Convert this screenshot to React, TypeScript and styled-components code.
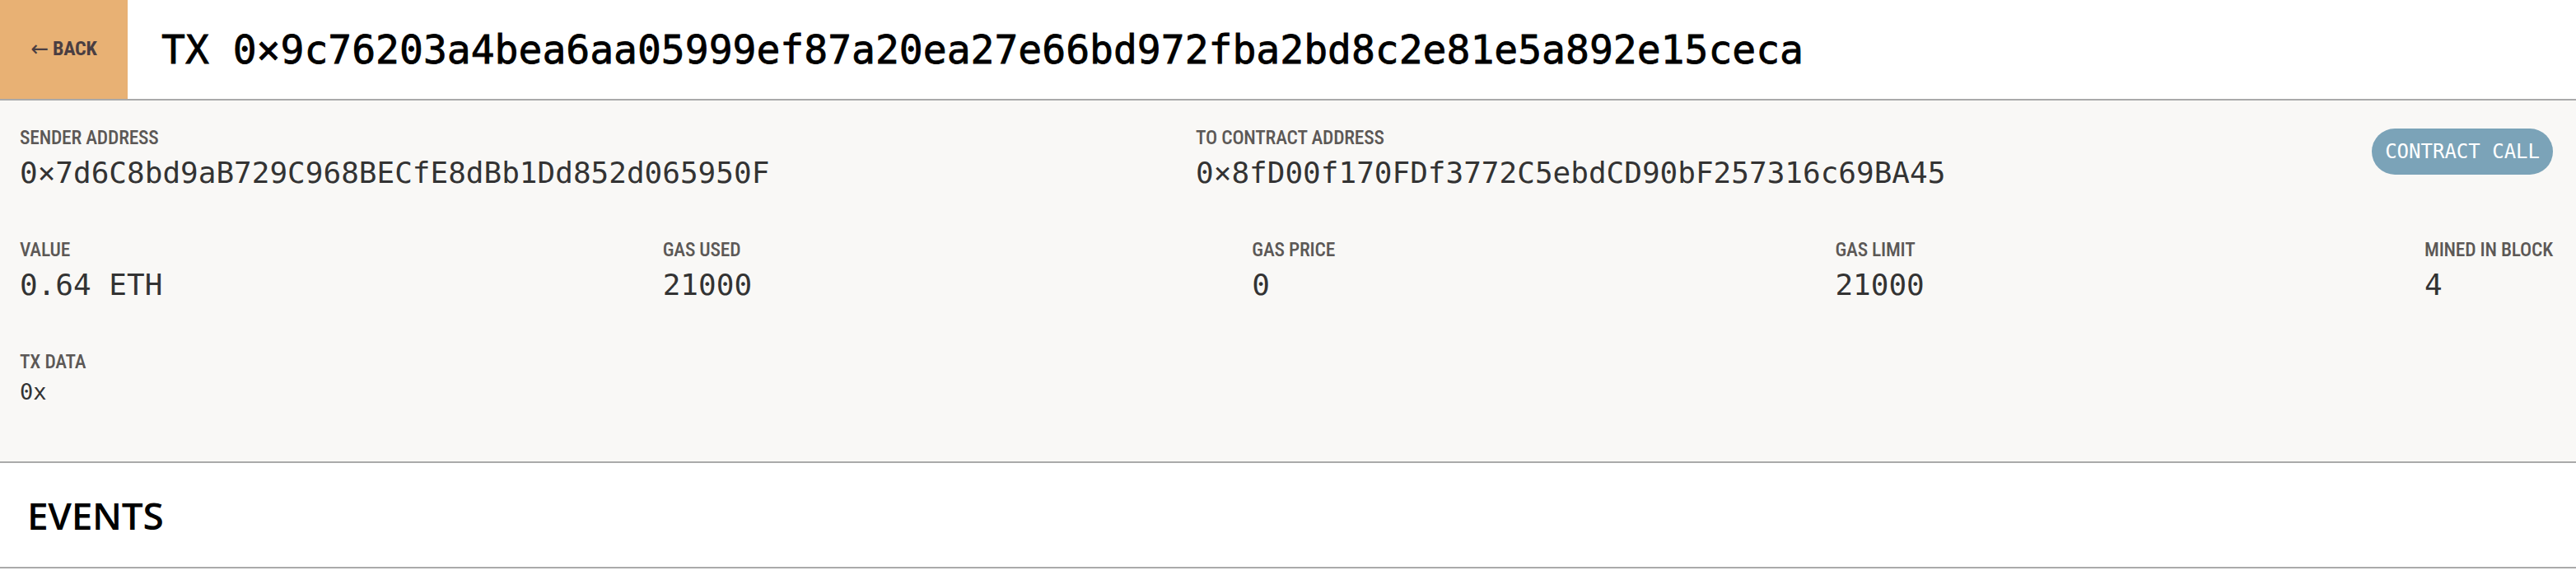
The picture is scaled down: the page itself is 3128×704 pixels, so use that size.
import React from "react";
import styled, { createGlobalStyle } from "styled-components";

const Global = createGlobalStyle`
  html, body { margin: 0; padding: 0; background: #ffffff; }
  * { box-sizing: border-box; }
`;

const MONO = `"DejaVu Sans Mono", "Liberation Mono", monospace`;
const COND = `"Roboto Condensed", "Liberation Sans Narrow", Roboto, sans-serif`;
const SANS = `"Open Sans", "Noto Sans", sans-serif`;

const Page = styled.div`
  width: 100%;
  display: flex;
  flex-direction: column;
`;

const Header = styled.header`
  display: flex;
  align-items: stretch;
  height: 122px;
  border-bottom: 2px solid #aaaaaa;
  background: #ffffff;
`;

const BackButton = styled.button`
  width: 155px;
  border: none;
  margin: 0;
  padding: 0 0 2px;
  background: #e8b174;
  color: #4a3e42;
  font-family: ${COND};
  font-weight: 700;
  font-size: 24px;
  letter-spacing: -0.3px;
  display: flex;
  align-items: center;
  justify-content: center;
  gap: 5px;
  cursor: pointer;
`;

const Arrow = styled.span`
  font-family: "DejaVu Sans", sans-serif;
  font-weight: 400;
  font-size: 26px;
`;

const Title = styled.h1`
  margin: 0;
  padding-left: 41px;
  display: flex;
  align-items: center;
  font-family: ${MONO};
  font-size: 48px;
  font-weight: 400;
  -webkit-text-stroke: 0.8px #000000;
  color: #000000;
`;

const Panel = styled.section`
  background: #f9f8f6;
  border-bottom: 2px solid #aaaaaa;
  padding: 32px 28px 68px 24px;
  display: flex;
  flex-direction: column;
  gap: 60px;
`;

const Row = styled.div`
  display: flex;
  justify-content: space-between;
  align-items: flex-start;
`;

const Field = styled.div<{ $tight?: boolean }>`
  display: flex;
  flex-direction: column;
  gap: ${(p) => (p.$tight ? "8px" : "10px")};
`;

const Label = styled.div`
  font-family: ${COND};
  font-weight: 500;
  font-size: 23.5px;
  line-height: 26px;
  letter-spacing: -0.2px;
  color: #5c5856;
  text-transform: uppercase;
`;

const Value = styled.div<{ $small?: boolean }>`
  font-family: ${MONO};
  font-size: ${(p) => (p.$small ? "27px" : "36px")};
  line-height: ${(p) => (p.$small ? "32px" : "40px")};
  color: #333333;
  white-space: nowrap;
`;

const Pill = styled.span`
  align-self: flex-start;
  margin-top: 2px;
  height: 56px;
  padding: 0 16px;
  border-radius: 28px;
  background: #7ba3b8;
  color: #ffffff;
  font-family: ${MONO};
  font-size: 24px;
  display: flex;
  align-items: center;
`;

const Events = styled.section`
  height: 128px;
  border-bottom: 2px solid #aaaaaa;
  padding-left: 33px;
  display: flex;
  align-items: center;
  background: #ffffff;
`;

const EventsTitle = styled.h2`
  margin: 0;
  font-family: ${SANS};
  font-weight: 600;
  font-size: 46px;
  letter-spacing: -0.3px;
  color: #000000;
`;

const stats = [
  { label: "Value", value: "0.64 ETH" },
  { label: "Gas Used", value: "21000" },
  { label: "Gas Price", value: "0" },
  { label: "Gas Limit", value: "21000" },
  { label: "Mined in Block", value: "4" },
];

export default function App() {
  return (
    <Page>
      <Global />
      <Header>
        <BackButton>
          <Arrow>←</Arrow>
          <span>BACK</span>
        </BackButton>
        <Title>TX 0×9c76203a4bea6aa05999ef87a20ea27e66bd972fba2bd8c2e81e5a892e15ceca</Title>
      </Header>
      <Panel>
        <Row>
          <Field>
            <Label>Sender Address</Label>
            <Value>0×7d6C8bd9aB729C968BECfE8dBb1Dd852d065950F</Value>
          </Field>
          <Field>
            <Label>To Contract Address</Label>
            <Value>0×8fD00f170FDf3772C5ebdCD90bF257316c69BA45</Value>
          </Field>
          <Pill>CONTRACT CALL</Pill>
        </Row>
        <Row>
          {stats.map((s) => (
            <Field key={s.label}>
              <Label>{s.label}</Label>
              <Value>{s.value}</Value>
            </Field>
          ))}
        </Row>
        <Row>
          <Field $tight>
            <Label>TX Data</Label>
            <Value $small>0x</Value>
          </Field>
        </Row>
      </Panel>
      <Events>
        <EventsTitle>EVENTS</EventsTitle>
      </Events>
    </Page>
  );
}
